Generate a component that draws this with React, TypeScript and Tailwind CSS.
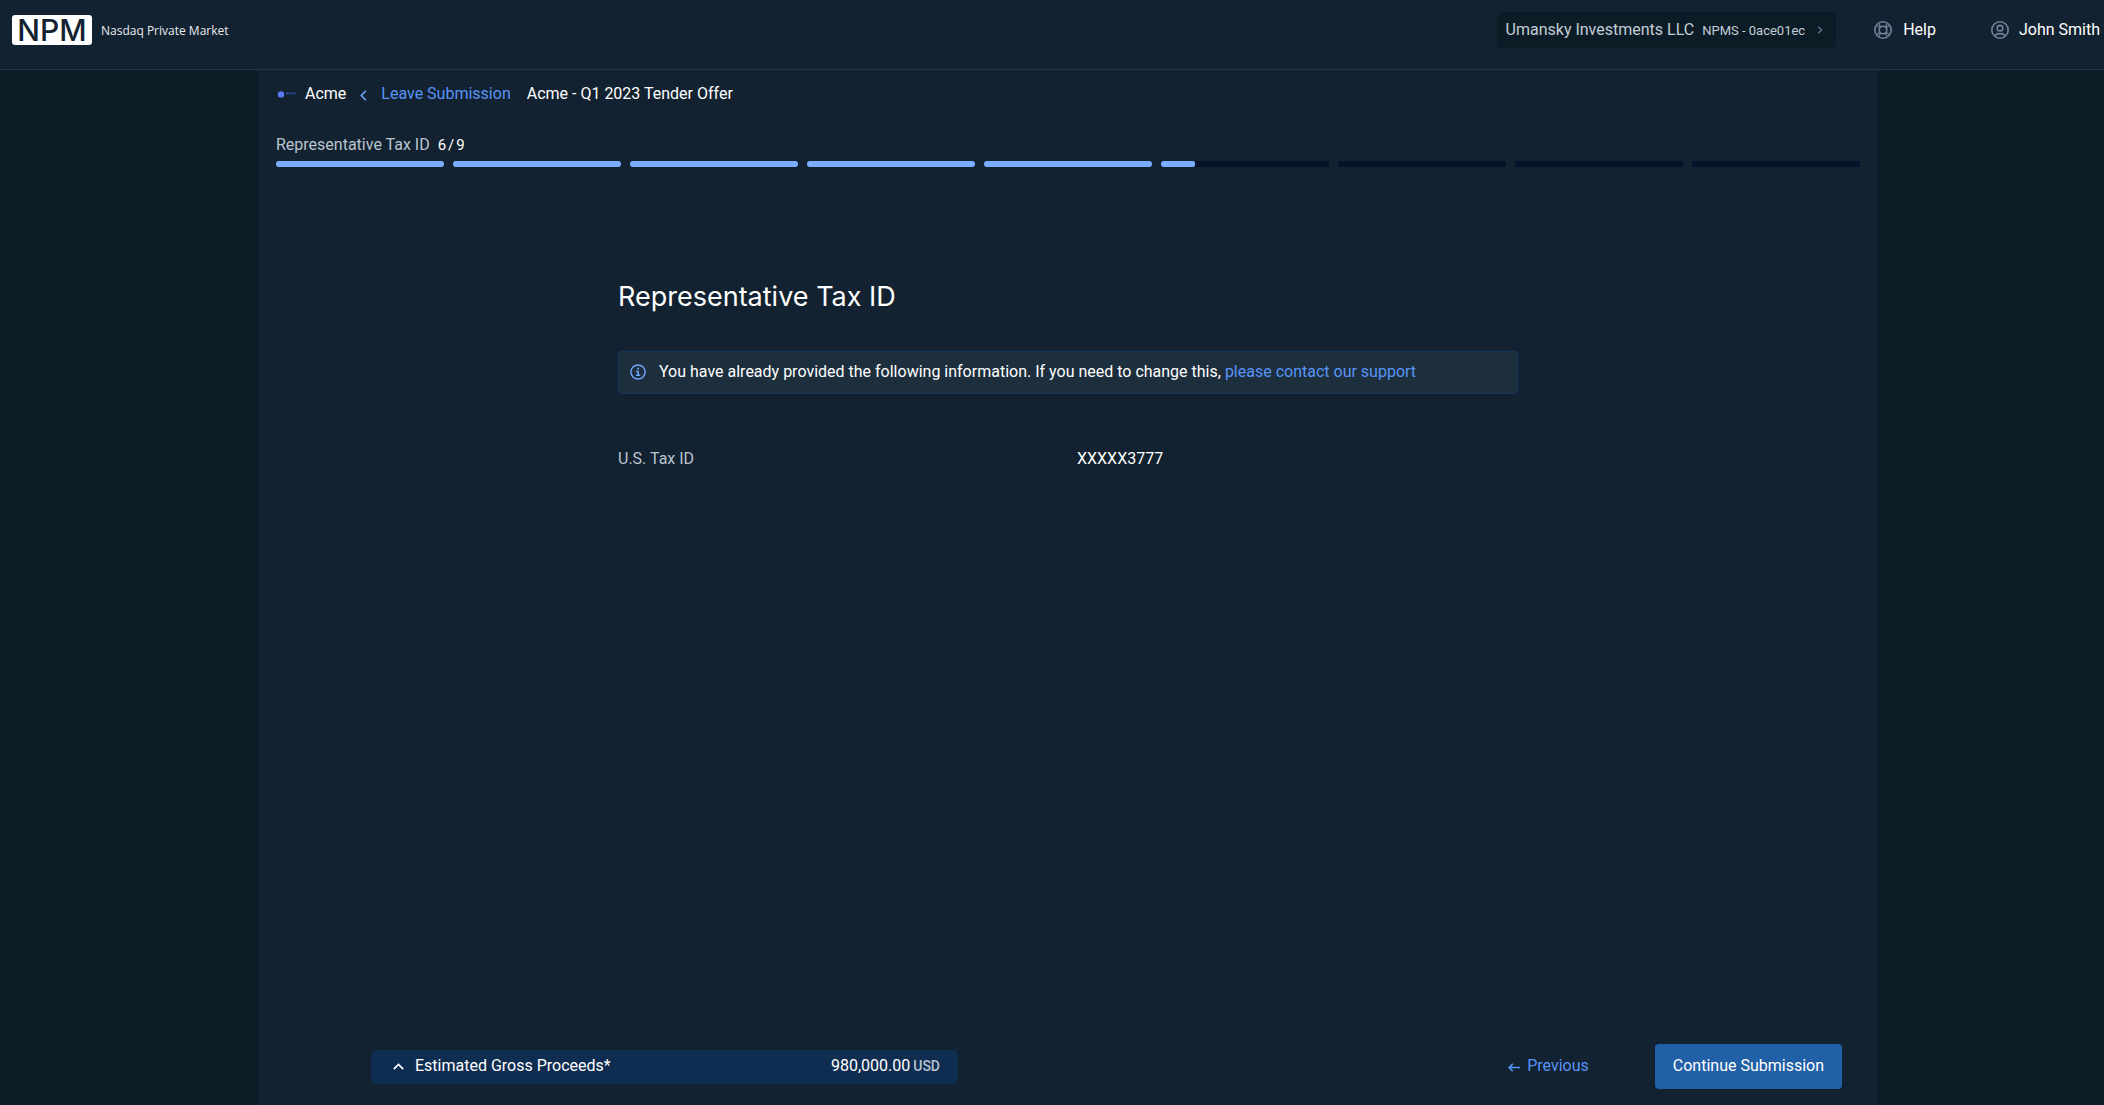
import { ReactElement } from 'react'

const TOTAL_STEPS = 9
const CURRENT_STEP = 6
const CURRENT_STEP_PROGRESS = 20

const stepProgress = (step: number): number => {
  if (step < CURRENT_STEP) return 100
  return step === CURRENT_STEP ? CURRENT_STEP_PROGRESS : 0
}

const HelpIcon = (): ReactElement => (
  <svg className="size-[18px]" viewBox="0 0 18 18" fill="none" stroke="currentColor" strokeWidth="1.6" aria-hidden="true">
    <circle cx="9" cy="9" r="8.2" />
    <circle cx="9" cy="9" r="3.8" />
    <path d="M5 3l1.7 3.2M3 5l3.2 1.7M13 3l-1.7 3.2M15 5l-3.2 1.7M5 15l1.7-3.2M3 13l3.2-1.7M13 15l-1.7-3.2M15 13l-3.2-1.7" strokeWidth="1.3" />
  </svg>
)

const UserIcon = (): ReactElement => (
  <svg className="size-[18px]" viewBox="0 0 18 18" fill="none" stroke="currentColor" strokeWidth="1.6" aria-hidden="true">
    <circle cx="9" cy="9" r="8.2" />
    <circle cx="9" cy="7.2" r="2.8" />
    <path d="M3.8 14.6c1.2-1.4 3-2 5.2-2s4 .6 5.2 2" />
  </svg>
)

const InfoIcon = (): ReactElement => (
  <svg className="size-4 text-[#6fa5fb]" viewBox="0 0 16 16" fill="none" stroke="currentColor" strokeWidth="1.5" aria-hidden="true">
    <circle cx="8" cy="8" r="7.1" />
    <path d="M6.2 7.4h2v3.8M6 11.2h4.2" />
    <path d="M7.2 4.7h1.8" strokeWidth="1.8" />
  </svg>
)

const Header = (): ReactElement => (
  <header className="flex h-[70px] items-start justify-between border-b border-[#243746] bg-[#132230] pr-1 pl-3">
    <a href="#home" className="mt-[15px] flex items-center gap-[9px]">
      <span className="flex h-[30px] w-20 items-center justify-center rounded-[3px] bg-white font-[Inter] text-[30px] leading-none font-medium text-[#132230]">
        NPM
      </span>
      <span className="pt-[2px] font-['Open_Sans'] text-[12px] font-medium text-[#e8ebee]">Nasdaq Private Market</span>
    </a>
    <nav className="mt-3 flex h-9 items-center text-white">
      <button type="button" className="mr-[38px] flex h-9 items-center gap-2 rounded-[5px] bg-[#0c1c27] px-[9px] text-[#c3ccd5]">
        <span>Umansky Investments LLC</span>
        <span className="pt-px text-[13px]">NPMS - 0ace01ec</span>
        <svg className="mx-1 h-2 w-[6px] text-[#5f7488]" viewBox="0 0 6 8" fill="none" stroke="currentColor" strokeWidth="1.4" aria-hidden="true">
          <path d="M1.2.8L4.6 4 1.2 7.2" />
        </svg>
      </button>
      <a href="#help" className="mr-[55px] flex items-center gap-[11px]">
        <span className="text-[#71849b]"><HelpIcon /></span>
        Help
      </a>
      <a href="#account" className="flex items-center gap-[10px]">
        <span className="text-[#71849b]"><UserIcon /></span>
        John Smith
      </a>
    </nav>
  </header>
)

const Breadcrumbs = (): ReactElement => (
  <div className="flex items-center">
    <svg className="mr-[9px] h-2 w-5" viewBox="0 0 20 8" aria-hidden="true">
      <circle cx="5" cy="4.4" r="3.2" fill="#5b78f5" />
      <path d="M10 3.4h11" stroke="#2d4bb0" strokeWidth="1.6" strokeDasharray="2.2 .6" />
    </svg>
    <span>Acme</span>
    <a href="#leave" className="ml-[14px] flex items-center gap-[14px] text-[#5894f7]">
      <svg className="mt-[2px] h-[11px] w-[7px] text-[#6fa5fb]" viewBox="0 0 7 11" fill="none" stroke="currentColor" strokeWidth="1.6" aria-hidden="true">
        <path d="M5.9.7L1.3 5.5l4.6 4.8" />
      </svg>
      Leave Submission
    </a>
    <span className="ml-4">Acme - Q1 2023 Tender Offer</span>
  </div>
)

const StepProgress = (): ReactElement => (
  <div className="mt-[27px]">
    <p className="flex items-center gap-2 leading-6">
      <span className="text-[#b9c4cf]">Representative Tax ID</span>
      <span className="flex gap-[2px] text-[15px]">
        <span>{CURRENT_STEP}</span>
        <span>/</span>
        <span>{TOTAL_STEPS}</span>
      </span>
    </p>
    <div className="mt-1 flex gap-[9px]">
      {Array.from({ length: TOTAL_STEPS }, (_, i: number) => (
        <div className="h-[6px] flex-1 overflow-hidden rounded-[2px] bg-[#04142b]" key={i}>
          <div className="h-full rounded-[2px] bg-[#7aadff]" style={{ width: `${stepProgress(i + 1)}%` }} />
        </div>
      ))}
    </div>
  </div>
)

const TaxDetails = (): ReactElement => (
  <section className="mx-auto mt-[112px] w-full max-w-[900px]">
    <h1 className="font-[Inter] text-[27px] leading-9">Representative Tax ID</h1>
    <div className="mt-9 flex items-center gap-[13px] rounded-[4px] border border-[#12365f] bg-[#1d2e3c] px-[11px] pt-2 pb-[9px] leading-6">
      <InfoIcon />
      <p>
        You have already provided the following information. If you need to change this,{' '}
        <a href="#support" className="text-[#5894f7]">please contact our support</a>
      </p>
    </div>
    <dl className="mt-[53px] grid grid-cols-2 gap-[18px] leading-6">
      <dt className="text-[#b9c4cf]">U.S. Tax ID</dt>
      <dd>XXXXX3777</dd>
    </dl>
  </section>
)

const Footer = (): ReactElement => (
  <footer className="mt-auto flex items-center pr-[18px] pb-4 pl-[95px]">
    <button type="button" className="flex h-[34px] w-full max-w-[587px] items-center rounded-[5px] bg-[#0f2d51] pr-[18px] pb-[2px] pl-[22px]">
      <svg className="mt-[2px] mr-[11px] h-[7px] w-[11px]" viewBox="0 0 11 7" fill="none" stroke="currentColor" strokeWidth="1.7" aria-hidden="true">
        <path d="M.8 6.2l4.7-4.7 4.7 4.7" />
      </svg>
      <span>Estimated Gross Proceeds*</span>
      <span className="ml-auto">980,000.00</span>
      <span className="ml-[3px] pt-[2px] text-[14px] font-medium text-[#b9c4cf]">USD</span>
    </button>
    <button type="button" className="ml-auto flex items-center gap-[7px] pb-[2px] text-[#5894f7]">
      <svg className="mt-1 h-[9px] w-3" viewBox="0 0 12 9" fill="none" stroke="currentColor" strokeWidth="1.6" aria-hidden="true">
        <path d="M12 4.5H1.4M4.8.8L1.2 4.5l3.6 3.7" />
      </svg>
      Previous
    </button>
    <button type="button" className="ml-[66px] h-[45px] rounded-[4px] bg-[#215fa6] px-[18px] pb-[2px]">
      Continue Submission
    </button>
  </footer>
)

const App = (): ReactElement => (
  <div className="flex min-h-screen flex-col bg-[#0c1c27] font-[Roboto,sans-serif] text-[16px] text-white">
    <Header />
    <div className="flex flex-1 pr-[226px] pl-[258px]">
      <main className="flex flex-1 flex-col bg-[#132230] px-[18px] pt-3">
        <Breadcrumbs />
        <StepProgress />
        <TaxDetails />
        <Footer />
      </main>
    </div>
  </div>
)

export default App
